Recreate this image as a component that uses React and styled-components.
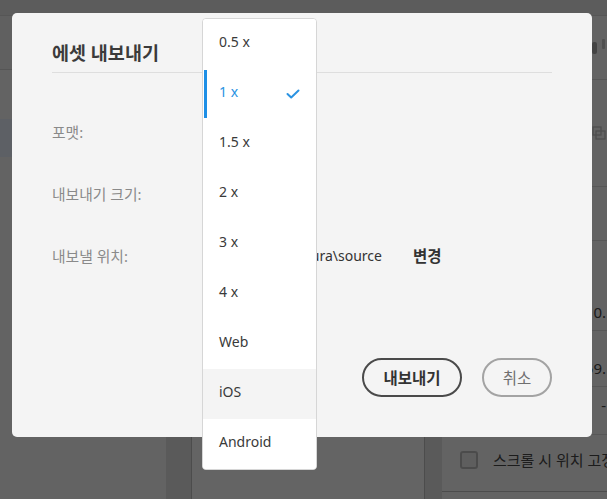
import React, { useState } from "react";
import styled, { createGlobalStyle } from "styled-components";

const GlobalStyle = createGlobalStyle`
  html, body {
    margin: 0;
    padding: 0;
    width: 607px;
    height: 499px;
    overflow: hidden;
    font-family: "Noto Sans", "Noto Sans CJK KR", sans-serif;
  }
  * {
    box-sizing: border-box;
  }
`;

const scales = ["0.5 x", "1 x", "1.5 x", "2 x", "3 x", "4 x", "Web", "iOS", "Android"];

// inspector sections behind the dialog, only their right edge shows
const sections = [
  { height: 107, icon: true },
  { height: 54 },
  { height: 90, value: "110.", align: "flex-end" },
  { height: 56, value: "359.", align: "flex-end" },
  { height: 48, value: "-", align: "flex-start" },
];

export default function App() {
  const [scale, setScale] = useState("1 x");
  const [hovered, setHovered] = useState("iOS");

  return (
    <>
      <GlobalStyle />
      <Screen>
        <TopBar />
        <Workspace>
          <Sidebar>
            <LayerList>
              <LayerHeader />
              <LayerRow />
              <LayerRow selected />
            </LayerList>
            <ScrollTrack />
          </Sidebar>
          <Canvas />
          <Gutter />
          <Inspector>
            <InspectorHead>
              <ScrollThumb />
            </InspectorHead>
            {sections.map((s, i) => (
              <Section key={i} h={s.height} align={s.align}>
                {s.icon && (
                  <svg width="14" height="14" viewBox="0 0 14 14" fill="none" stroke="#c2c2c2" strokeWidth="1.3">
                    <rect x="1" y="1" width="8" height="8" />
                    <rect x="4" y="5" width="9" height="8" />
                  </svg>
                )}
                {s.value && <InspectorValue>{s.value}</InspectorValue>}
              </Section>
            ))}
            <CheckRow>
              <CheckBox />
              <span>스크롤 시 위치 고정</span>
            </CheckRow>
          </Inspector>
        </Workspace>
      </Screen>

      <Backdrop />

      <Dialog>
        <Title>에셋 내보내기</Title>
        <Form>
          <Row>
            <Label>포맷:</Label>
            <SelectBox />
          </Row>
          <Row>
            <Label>내보내기 크기:</Label>
            <SelectBox />
          </Row>
          <Row>
            <Label>내보낼 위치:</Label>
            <PathText>C:\Users\sakura\source</PathText>
            <LinkButton>변경</LinkButton>
          </Row>
        </Form>
        <Footer>
          <Button primary>내보내기</Button>
          <Button>취소</Button>
        </Footer>

        <Menu>
          {scales.map((s) => (
            <MenuItem
              key={s}
              active={s === scale}
              hover={s === hovered}
              onClick={() => setScale(s)}
              onMouseEnter={() => setHovered(s)}
            >
              {s}
              {s === scale && (
                <svg width="14" height="10" viewBox="0 0 14 10" fill="none" stroke="#2b93e2" strokeWidth="2" strokeLinecap="round" strokeLinejoin="round">
                  <polyline points="1.5,5 5.2,8.5 12.5,1.5" />
                </svg>
              )}
            </MenuItem>
          ))}
        </Menu>
      </Dialog>
    </>
  );
}

const Screen = styled.div`
  width: 607px;
  height: 499px;
  display: flex;
  flex-direction: column;
  background: #f8f8f8;
`;

const TopBar = styled.div`
  height: 16px;
  background: #e6e6e6;
  border-bottom: 1px solid #d6d6d6;
`;

const Workspace = styled.div`
  flex: 1;
  display: flex;
`;

const Sidebar = styled.div`
  width: 192px;
  flex: none;
  display: flex;
  border-right: 1px solid #bdbdbd;
`;

const LayerList = styled.div`
  flex: 1;
  display: flex;
  flex-direction: column;
`;

const LayerHeader = styled.div`
  height: 54px;
  border-bottom: 1px solid #d4d4d4;
  background: #f0f0f0;
`;

const LayerRow = styled.div`
  height: ${(p) => (p.selected ? "38px" : "49px")};
  background: ${(p) => (p.selected ? "#e8f1fd" : "transparent")};
`;

const ScrollTrack = styled.div`
  width: 25px;
  background: #e2e2e2;
`;

const Canvas = styled.div`
  width: 233px;
  flex: none;
  background: #fbfbfb;
  border-right: 1px solid #bdbdbd;
`;

const Gutter = styled.div`
  width: 17px;
  flex: none;
  background: #e2e2e2;
`;

const Inspector = styled.div`
  flex: 1;
  min-width: 0;
  overflow: hidden;
  display: flex;
  flex-direction: column;
  background: #f8f8f8;
`;

const InspectorHead = styled.div`
  height: 64px;
  border-bottom: 1px solid #dadada;
  position: relative;
`;

const ScrollThumb = styled.div`
  position: absolute;
  right: 10px;
  top: 26px;
  width: 5px;
  height: 12px;
  border-radius: 2px;
  background: #a8a8a8;
  box-shadow: 9px -4px 0 -1px #c9c9c9;
`;

const Section = styled.div`
  height: ${(p) => p.h}px;
  display: flex;
  align-items: ${(p) => p.align || "center"};
  justify-content: flex-end;
  padding: 8px 1px 8px 0;
  border-bottom: 1px solid #dadada;
`;

const InspectorValue = styled.span`
  font-size: 15px;
  line-height: 20px;
  color: #444;
  white-space: nowrap;
`;

const CheckRow = styled.div`
  height: 57px;
  display: flex;
  align-items: flex-start;
  gap: 15px;
  padding: 16px 0 0 18px;
  border-bottom: 1px solid #bdbdbd;
  font-size: 15px;
  line-height: 18px;
  color: #484848;
  white-space: nowrap;
  overflow: hidden;
`;

const CheckBox = styled.span`
  width: 18px;
  height: 18px;
  flex: none;
  border: 2px solid #bcbcbc;
  border-radius: 3px;
  background: #ececec;
`;

const Backdrop = styled.div`
  position: fixed;
  inset: 0;
  background: rgba(0, 0, 0, 0.6);
`;

const Dialog = styled.div`
  position: fixed;
  left: 12px;
  top: 13px;
  width: 580px;
  height: 424px;
  background: #f4f4f4;
  border-radius: 5px;
  padding: 28px 40px 40px;
  display: flex;
  flex-direction: column;
`;

const Title = styled.h2`
  margin: 0;
  font-size: 18.5px;
  font-weight: 700;
  line-height: 24px;
  color: #3b3b3b;
  padding-bottom: 7px;
  border-bottom: 1px solid #dedede;
`;

const Form = styled.div`
  display: flex;
  flex-direction: column;
  gap: 20px;
  padding-top: 37px;
`;

const Row = styled.div`
  height: 42px;
  display: flex;
  align-items: center;
`;

const Label = styled.span`
  width: 150px;
  font-size: 14.8px;
  color: #8a8a8a;
`;

const SelectBox = styled.span`
  width: 110px;
  height: 34px;
  border-left: 1px solid #d4d4d4;
`;

const PathText = styled.span`
  width: 180px;
  font-size: 14px;
  color: #333;
  text-align: right;
  white-space: nowrap;
  overflow: hidden;
`;

const LinkButton = styled.span`
  margin-left: 31px;
  font-size: 15.5px;
  font-weight: 700;
  color: #333;
  cursor: pointer;
`;

const Footer = styled.div`
  margin-top: auto;
  display: flex;
  justify-content: flex-end;
  gap: 20px;
`;

const Button = styled.button`
  height: 39px;
  width: ${(p) => (p.primary ? "100px" : "70px")};
  padding: 0;
  border-radius: 20px;
  border: 2px solid ${(p) => (p.primary ? "#4a4a4a" : "#a3a3a3")};
  background: transparent;
  font-family: "Noto Sans", "Noto Sans CJK KR", sans-serif;
  font-size: 15.5px;
  font-weight: ${(p) => (p.primary ? 700 : 400)};
  color: ${(p) => (p.primary ? "#333" : "#6f6f6f")};
  cursor: pointer;
`;

const Menu = styled.ul`
  position: absolute;
  left: 190px;
  top: 5px;
  width: 115px;
  margin: 0;
  padding: 0;
  list-style: none;
  background: #fff;
  border: 1px solid #d6d6d6;
  border-radius: 4px;
  overflow: hidden;
`;

const MenuItem = styled.li`
  position: relative;
  height: 50px;
  display: flex;
  align-items: center;
  justify-content: space-between;
  padding: 0 16px 6px 16px;
  font-size: 14px;
  color: ${(p) => (p.active ? "#2b93e2" : "#3a3a3a")};
  background: ${(p) => (p.hover && !p.active ? "#f4f4f4" : "#fff")};
  cursor: pointer;
  svg {
    margin-top: 6px;
  }
  &::before {
    content: "";
    display: ${(p) => (p.active ? "block" : "none")};
    position: absolute;
    left: 1px;
    top: 1px;
    bottom: 1px;
    width: 3px;
    background: #1e8fe6;
  }
`;
